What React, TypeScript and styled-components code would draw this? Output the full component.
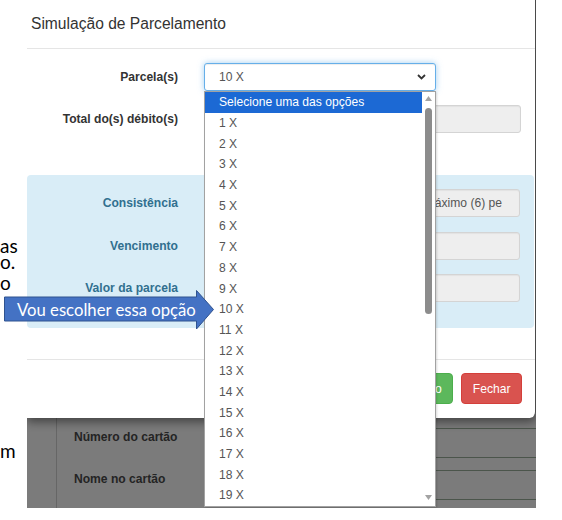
import React from 'react';
import styled, { createGlobalStyle } from 'styled-components';

const Global = createGlobalStyle`
  html, body { margin: 0; padding: 0; background: #fff; }
  body { width: 562px; height: 520px; overflow: hidden; font-family: "Liberation Sans", Arial, sans-serif; }
  * { box-sizing: border-box; }
`;

const Page = styled.div`
  position: relative;
  display: flex;
  width: 562px;
  height: 520px;
`;

const DocStrip = styled.div`
  width: 27px;
  flex: none;
  display: flex;
  flex-direction: column;
  font-family: Lato, "Open Sans", sans-serif;
  font-size: 19px;
  color: #000;
`;

const DocLine = styled.div<{ $gap: number }>`
  margin-top: ${(p) => p.$gap}px;
  height: 16px;
  line-height: 16px;
  white-space: nowrap;
`;

const Shot = styled.div`
  width: 509px;
  height: 508px;
  flex: none;
  display: flex;
  flex-direction: column;
  background: #7b7b7b;
  overflow: hidden;
`;

const Modal = styled.div`
  position: relative;
  z-index: 1;
  height: 418px;
  flex: none;
  display: flex;
  flex-direction: column;
  background: #fff;
  border-right: 1px solid #4a4a4a;
  border-bottom-right-radius: 6px;
  box-shadow: 0 4px 10px rgba(0, 0, 0, 0.45);
`;

const Header = styled.div`
  padding: 13px 4px 13px 4px;
  border-bottom: 1px solid #e5e5e5;
`;

const Title = styled.div`
  font-size: 15.6px;
  line-height: 22px;
  color: #333;
`;

const Body = styled.div`
  padding: 14px 0 31px 0;
  display: flex;
  flex-direction: column;
`;

const Rows = styled.div<{ $gap: number }>`
  display: flex;
  flex-direction: column;
  gap: ${(p) => p.$gap}px;
`;

const Row = styled.div`
  display: grid;
  grid-template-columns: 151px 1fr;
  column-gap: 26px;
  align-items: center;
  height: 28px;
`;

const Label = styled.label<{ $info?: boolean }>`
  text-align: right;
  font-weight: bold;
  font-size: 12.1px;
  color: ${(p) => (p.$info ? '#31708f' : '#333')};
  white-space: nowrap;
`;

const SelectWrap = styled.div`
  position: relative;
  width: 232px;
  height: 28px;
`;

const SelectBox = styled.div`
  height: 28px;
  display: flex;
  align-items: center;
  justify-content: space-between;
  padding: 0 9px 0 14px;
  border: 1px solid #66afe9;
  border-radius: 3px;
  box-shadow: inset 0 1px 1px rgba(0, 0, 0, 0.075), 0 0 6px rgba(102, 175, 233, 0.6);
  font-size: 12.1px;
  color: #555;
  background: #fff;
`;

const ReadInput = styled.input`
  height: 28px;
  width: 100%;
  min-width: 0;
  margin: 0;
  padding: 0 17px 0 12px;
  border: 1px solid #d4d4d4;
  border-radius: 3px;
  background: #eee;
  font-family: "Liberation Sans", Arial, sans-serif;
  font-size: 12.1px;
  color: #555;
  box-shadow: inset 0 1px 1px rgba(0, 0, 0, 0.05);
  outline: none;
`;

const TotalField = styled(ReadInput)`
  width: auto;
  margin-right: 14px;
`;

const InfoPanel = styled.div`
  margin-top: 42px;
  margin-right: 1px;
  padding: 14px 14px 26px 0;
  background: #d9edf7;
  border-radius: 4px;
`;

const Footer = styled.div`
  border-top: 1px solid #e5e5e5;
  padding: 13px 13px 0 0;
  display: flex;
  justify-content: flex-end;
  gap: 8px;
`;

const Button = styled.button<{ $tone: 'success' | 'danger' }>`
  height: 31px;
  padding: 0 10.5px;
  border-radius: 4px;
  border: 1px solid ${(p) => (p.$tone === 'success' ? '#4cae4c' : '#d43f3a')};
  background: ${(p) => (p.$tone === 'success' ? '#5cb85c' : '#d9534f')};
  color: #fff;
  font-family: "Liberation Sans", Arial, sans-serif;
  font-size: 12.1px;
  white-space: nowrap;
`;

const Dropdown = styled.div`
  position: absolute;
  top: 28px;
  left: 0;
  width: 232px;
  height: 416px;
  z-index: 10;
  display: grid;
  grid-template-columns: 1fr 13px;
  background: #fff;
  border: 1px solid #a2a2a2;
  box-shadow: 1px 1px 2px rgba(0, 0, 0, 0.15);
`;

const OptionList = styled.div`
  display: flex;
  flex-direction: column;
`;

const Option = styled.div<{ $active?: boolean }>`
  height: 20.7px;
  flex: none;
  display: flex;
  align-items: center;
  padding-left: 14px;
  font-size: 12.1px;
  color: ${(p) => (p.$active ? '#fff' : '#555')};
  background: ${(p) => (p.$active ? '#1c69d4' : 'transparent')};
  white-space: nowrap;
`;

const Track = styled.div`
  display: flex;
  flex-direction: column;
  align-items: center;
  padding: 4px 0 6px;
  background: #fff;
`;

const Thumb = styled.div`
  margin-top: 7px;
  width: 7px;
  height: 206px;
  border-radius: 4px;
  background: #8c8c8c;
`;

const TrackSpace = styled.div`
  flex: 1;
`;

const BackArea = styled.div`
  flex: 1;
  display: grid;
  grid-template-columns: 30px 1fr;
`;

const SideCol = styled.div`
  border-right: 1px solid #666;
`;

const BackForm = styled.div`
  padding: 10px 0 0 17px;
  display: flex;
  flex-direction: column;
  gap: 12px;
`;

const BackRow = styled.div`
  display: grid;
  grid-template-columns: 135px 1fr;
  height: 30px;
`;

const BackLabel = styled.div`
  font-weight: bold;
  font-size: 12.1px;
  line-height: 18px;
  color: #242424;
  white-space: nowrap;
`;

const BackInput = styled.div`
  height: 30px;
  margin-right: -20px;
  border: 1px solid #4b554b;
`;

const Callout = styled.div`
  position: absolute;
  left: 4px;
  top: 290px;
  width: 211px;
  height: 40px;
  z-index: 20;
  display: flex;
  align-items: center;
  padding-left: 13px;
`;

const CalloutShape = styled.svg`
  position: absolute;
  inset: 0;
`;

const CalloutText = styled.span`
  position: relative;
  font-family: Lato, "Open Sans", sans-serif;
  font-size: 16.7px;
  color: #fff;
  white-space: nowrap;
`;

const options = ['Selecione uma das opções', ...Array.from({ length: 19 }, (_, i) => `${i + 1} X`)];

export default function App() {
  return (
    <>
      <Global />
      <Page>
        <DocStrip>
          <DocLine $gap={238}>as</DocLine>
          <DocLine $gap={0}>o.</DocLine>
          <DocLine $gap={5}>o</DocLine>
          <DocLine $gap={152}>m</DocLine>
        </DocStrip>
        <Shot>
          <Modal>
            <Header>
              <Title>Simulação de Parcelamento</Title>
            </Header>
            <Body>
              <Rows $gap={14}>
                <Row>
                  <Label>Parcela(s)</Label>
                  <SelectWrap>
                    <SelectBox>
                      <span>10 X</span>
                      <svg width="9" height="6" viewBox="0 0 9 6">
                        <path d="M1 1 L4.5 4.5 L8 1" fill="none" stroke="#333" strokeWidth="1.8" />
                      </svg>
                    </SelectBox>
                    <Dropdown>
                      <OptionList>
                        {options.map((o, i) => (
                          <Option key={o} $active={i === 0}>
                            {o}
                          </Option>
                        ))}
                      </OptionList>
                      <Track>
                        <svg width="7" height="5" viewBox="0 0 7 5">
                          <path d="M0 5 L3.5 0 L7 5 Z" fill="#a3a3a3" />
                        </svg>
                        <Thumb />
                        <TrackSpace />
                        <svg width="7" height="5" viewBox="0 0 7 5">
                          <path d="M0 0 L7 0 L3.5 5 Z" fill="#a3a3a3" />
                        </svg>
                      </Track>
                    </Dropdown>
                  </SelectWrap>
                </Row>
                <Row>
                  <Label>Total do(s) débito(s)</Label>
                  <TotalField readOnly value="" />
                </Row>
              </Rows>
              <InfoPanel>
                <Rows $gap={14.5}>
                  <Row>
                    <Label $info>Consistência</Label>
                    <ReadInput readOnly value="A parcela informada excede o número máximo (6) permitido" />
                  </Row>
                  <Row>
                    <Label $info>Vencimento</Label>
                    <ReadInput readOnly value="" />
                  </Row>
                  <Row>
                    <Label $info>Valor da parcela</Label>
                    <ReadInput readOnly value="" />
                  </Row>
                </Rows>
              </InfoPanel>
            </Body>
            <Footer>
              <Button $tone="success">Gerar Parcelamento</Button>
              <Button $tone="danger">Fechar</Button>
            </Footer>
          </Modal>
          <BackArea>
            <SideCol />
            <BackForm>
              <BackRow>
                <BackLabel>Número do cartão</BackLabel>
                <BackInput />
              </BackRow>
              <BackRow>
                <BackLabel>Nome no cartão</BackLabel>
                <BackInput />
              </BackRow>
            </BackForm>
          </BackArea>
        </Shot>
        <Callout>
          <CalloutShape width="211" height="40" viewBox="0 0 211 40">
            <path
              d="M0.5 7 L192.5 7 L192.5 0.5 L209.5 19.5 L192.5 39 L192.5 31 L0.5 31 Z"
              fill="#4472c4"
              stroke="#2f528f"
              strokeWidth="1"
            />
          </CalloutShape>
          <CalloutText>Vou escolher essa opção</CalloutText>
        </Callout>
      </Page>
    </>
  );
}
